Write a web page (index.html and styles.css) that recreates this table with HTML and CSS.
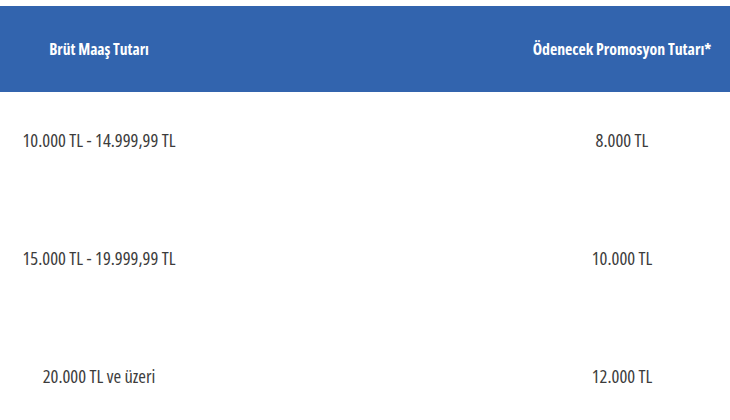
FILE: index.html
```html
<!DOCTYPE html>
<html lang="tr">
<head>
<meta charset="utf-8">
<link rel="stylesheet" href="styles.css">
</head>
<body>
<div class="table">
  <div class="head">
    <div class="cell left"><span class="t">Brüt Maaş Tutarı</span></div>
    <div class="cell"></div>
    <div class="cell right"><span class="t">Ödenecek Promosyon Tutarı*</span></div>
  </div>
  <div class="row">
    <div class="cell left"><span class="t">10.000 TL - 14.999,99 TL</span></div>
    <div class="cell"></div>
    <div class="cell right"><span class="t">8.000 TL</span></div>
  </div>
  <div class="row">
    <div class="cell left"><span class="t">15.000 TL - 19.999,99 TL</span></div>
    <div class="cell"></div>
    <div class="cell right"><span class="t">10.000 TL</span></div>
  </div>
  <div class="row">
    <div class="cell left"><span class="t">20.000 TL ve üzeri</span></div>
    <div class="cell"></div>
    <div class="cell right"><span class="t">12.000 TL</span></div>
  </div>
</div>
</body>
</html>
```
FILE: styles.css
```css
html, body {
  margin: 0;
  padding: 0;
  background: #ffffff;
}
body {
  width: 730px;
  height: 420px;
  overflow: hidden;
  font-family: "Open Sans", "DejaVu Sans", sans-serif;
  font-stretch: 75%;
}
.table {
  padding-top: 6px;
}
.head, .row {
  display: grid;
  grid-template-columns: 198px 1fr 216px;
}
.head {
  height: 86px;
  align-items: center;
  background: #3264ae;
  color: #ffffff;
  font-weight: 700;
  font-size: 15.5px;
}
.head .right {
  font-size: 15.8px;
}
.row {
  height: 118px;
  box-sizing: border-box;
  padding-top: 36px;
  align-items: start;
  color: #3c3c3c;
  font-size: 18.5px;
  line-height: 24px;
}
.row:last-child {
  height: auto;
  padding-bottom: 8px;
}
.cell {
  text-align: center;
  white-space: nowrap;
}
.t {
  display: inline-block;
}
```
